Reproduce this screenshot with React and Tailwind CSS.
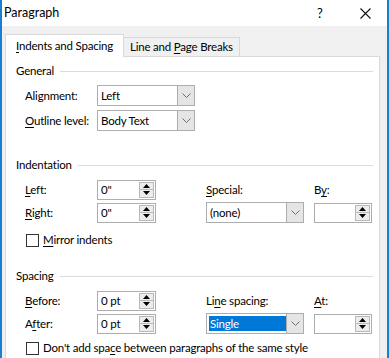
import React from "react";

const U = ({ children }) => <span className="underline underline-offset-[2px]">{children}</span>;

function Chevron() {
  return (
    <svg width="9" height="5" viewBox="0 0 9 5" aria-hidden="true">
      <polyline points="0.5,0.5 4.5,4.5 8.5,0.5" fill="none" stroke="#6d6d6d" strokeWidth="1" />
    </svg>
  );
}

function Combo({ value, width, selected }) {
  return (
    <div
      className="h-[21px] flex border border-[#adadad] bg-white"
      style={{ width }}
    >
      <div className="flex-1 flex items-center pl-[2px]">
        {selected ? (
          <span className="bg-[#0078d7] text-white h-[15px] leading-[15px] px-[1px] w-full">{value}</span>
        ) : (
          <span className="pl-[1px]">{value}</span>
        )}
      </div>
      <div className="w-[17px] bg-[#e5e5e5] border-l border-[#adadad] flex items-center justify-center">
        <Chevron />
      </div>
    </div>
  );
}

function Tri({ up }) {
  return (
    <svg width="7" height="4" viewBox="0 0 7 4" aria-hidden="true">
      <polygon points={up ? "3.5,0 7,4 0,4" : "0,0 7,0 3.5,4"} fill="#000" />
    </svg>
  );
}

function Spin({ value, width }) {
  return (
    <div className="h-[20px] flex border border-[#adadad] bg-white" style={{ width }}>
      <div className="flex-1 flex items-center pl-[3px]">{value}</div>
      <div className="w-[15px] flex flex-col py-[1px] mr-[1px]">
        <div className="flex-1 border border-[#b9b9b9] bg-[#ececec] flex items-center justify-center">
          <Tri up />
        </div>
        <div className="flex-1 border border-t-0 border-[#b9b9b9] bg-[#ececec] flex items-center justify-center">
          <Tri />
        </div>
      </div>
    </div>
  );
}

function Header({ children, mt }) {
  return (
    <div className={`h-[16px] flex items-center gap-[6px] pl-[10px] pr-[6px] ${mt}`}>
      <span>{children}</span>
      <div className="flex-1 h-px bg-[#dcdcdc]" />
    </div>
  );
}

function Check({ children }) {
  return (
    <div className="flex items-center gap-[4px] pl-[20px]">
      <div className="w-[13px] h-[13px] border border-[#333] bg-white" />
      <span>{children}</span>
    </div>
  );
}

export default function App() {
  return (
    <div className="w-[389px] h-[358px] overflow-hidden border-x-2 border-[#1a7fd4] bg-[#f0f0f0] text-[11.5px] tracking-[-0.2px] text-black font-['Lato','Liberation_Sans',sans-serif] leading-none whitespace-nowrap">
      <div className="h-[26px] bg-white flex items-center pl-[2px]">
        <span className="flex-1 text-[12.5px] tracking-normal">Paragraph</span>
        <span className="w-[12px] text-[13px] mr-[31px]">?</span>
        <svg width="11" height="11" viewBox="0 0 11 11" className="mr-[16px]" aria-hidden="true">
          <path d="M0.5 0.5L10.5 10.5M10.5 0.5L0.5 10.5" stroke="#111" strokeWidth="1.1" />
        </svg>
      </div>

      <div className="flex items-end pl-[3px] pt-[7px]">
        <div className="h-[23px] w-[119px] bg-white border border-b-0 border-[#d9d9d9] flex items-center pl-[10px] relative top-px">
          <span><U>I</U>ndents and Spacing</span>
        </div>
        <div className="h-[19px] w-[116px] bg-[#f0f0f0] border border-l-0 border-b-0 border-[#d9d9d9] flex items-center pl-[6px]">
          <span>Line and <U>P</U>age Breaks</span>
        </div>
      </div>

      <div className="ml-[3px] w-[375px] h-[320px] bg-white border border-[#d9d9d9]">
        <Header mt="mt-[6px]">General</Header>

        <div className="mt-[6px] h-[21px] flex items-center pl-[19px]">
          <span className="w-[72px]">Alignment:</span>
          <Combo value="Left" width={98} />
        </div>
        <div className="mt-[4px] h-[21px] flex items-center pl-[19px]">
          <span className="w-[72px]"><U>O</U>utline level:</span>
          <Combo value="Body Text" width={98} />
        </div>

        <Header mt="mt-[26px]">Indentation</Header>

        <div className="mt-[6px] h-[21px] flex items-center pl-[19px]">
          <span className="w-[72px]"><U>L</U>eft:</span>
          <Spin value={'0"'} width={59} />
          <span className="ml-[50px] w-[108px]"><U>S</U>pecial:</span>
          <span>B<U>y</U>:</span>
        </div>
        <div className="mt-[2px] h-[21px] flex items-center pl-[19px]">
          <span className="w-[72px]"><U>R</U>ight:</span>
          <Spin value={'0"'} width={59} />
          <div className="ml-[50px]">
            <Combo value="(none)" width={98} />
          </div>
          <div className="ml-[10px]">
            <Spin value="" width={58} />
          </div>
        </div>

        <div className="mt-[9px] h-[16px] flex items-center">
          <Check><U>M</U>irror indents</Check>
        </div>

        <Header mt="mt-[20px]">Spacing</Header>

        <div className="mt-[6px] h-[21px] flex items-center pl-[19px]">
          <span className="w-[72px]"><U>B</U>efore:</span>
          <Spin value="0 pt" width={59} />
          <span className="ml-[50px] w-[108px]">Li<U>n</U>e spacing:</span>
          <span><U>A</U>t:</span>
        </div>
        <div className="mt-[2px] h-[21px] flex items-center pl-[19px]">
          <span className="w-[72px]">A<U>f</U>ter:</span>
          <Spin value="0 pt" width={59} />
          <div className="ml-[50px]">
            <Combo value="Single" width={98} selected />
          </div>
          <div className="ml-[10px]">
            <Spin value="" width={58} />
          </div>
        </div>

        <div className="mt-[6px] h-[16px] flex items-center">
          <Check>Don't add spa<U>c</U>e between paragraphs of the same style</Check>
        </div>
      </div>
    </div>
  );
}
